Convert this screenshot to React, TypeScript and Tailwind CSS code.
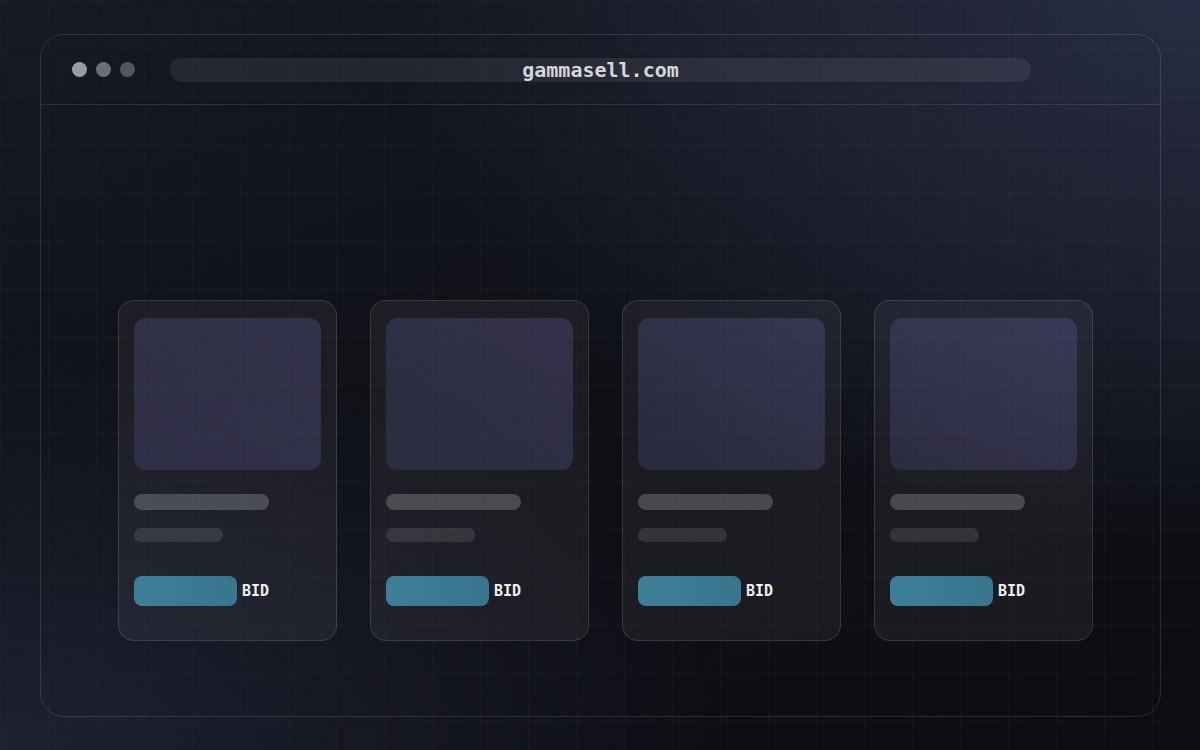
import React from "react";

const Card = () => (
  <div className="w-[219px] h-[341px] shrink-0 rounded-[16px] border border-white/[0.12] bg-white/[0.05] pl-[15px] pt-[17px] flex flex-col">
    <div className="w-[187px] h-[152px] rounded-[12px] bg-gradient-to-tr from-[rgba(125,118,215,0.16)] to-[rgba(140,128,230,0.2)]" />
    <div className="mt-[24px] w-[135px] h-[16px] rounded-full bg-white/[0.2]" />
    <div className="mt-[18px] w-[89px] h-[14px] rounded-full bg-white/[0.11]" />
    <div className="mt-[34px] flex items-center gap-[5px]">
      <div className="w-[103px] h-[30px] rounded-[8px] bg-gradient-to-r from-[#3e7f98] to-[#37768d]" />
      <span className="text-[15px] font-bold text-[#eef0f4] leading-none" style={{ fontFamily: '"DejaVu Sans Mono", monospace' }}>BID</span>
    </div>
  </div>
);

export default function App() {
  return (
    <div className="relative w-[1200px] h-[750px] overflow-hidden bg-[radial-gradient(ellipse_80%_85%_at_100%_0%,#282c42_0%,rgba(40,44,66,0.55)_45%,transparent_85%),radial-gradient(ellipse_60%_55%_at_0%_100%,#1f2133_0%,rgba(31,33,51,0.5)_45%,transparent_100%),linear-gradient(160deg,#171a22_0%,#0f1117_45%,#0d0e13_100%)]">
      <div className="absolute inset-0 pointer-events-none bg-[linear-gradient(to_right,rgba(255,255,255,0.025)_1px,transparent_1px),linear-gradient(to_bottom,rgba(255,255,255,0.025)_1px,transparent_1px)] bg-[size:48px_48px]" />
      <div className="relative pt-[34px] px-[40px]">
        <div className="w-[1121px] h-[683px] rounded-[24px] border border-white/[0.12] flex flex-col">
          <div className="h-[70px] shrink-0 border-b border-white/[0.1] flex items-center pl-[31px]">
            <div className="flex items-center gap-[9px]">
              <div className="w-[15px] h-[15px] rounded-full bg-[#9a9ca3]" />
              <div className="w-[15px] h-[15px] rounded-full bg-[#6b6f7a]" />
              <div className="w-[15px] h-[15px] rounded-full bg-[#55575f]" />
            </div>
            <div className="ml-[35px] w-[861px] h-[24px] rounded-full bg-white/[0.07] flex items-center justify-center">
              <span className="text-[20px] font-bold text-[#d4d6dc] leading-none" style={{ fontFamily: '"DejaVu Sans Mono", monospace' }}>gammasell.com</span>
            </div>
          </div>
          <div className="flex gap-[33px] pl-[77px] pt-[195px]">
            <Card />
            <Card />
            <Card />
            <Card />
          </div>
        </div>
      </div>
    </div>
  );
}
